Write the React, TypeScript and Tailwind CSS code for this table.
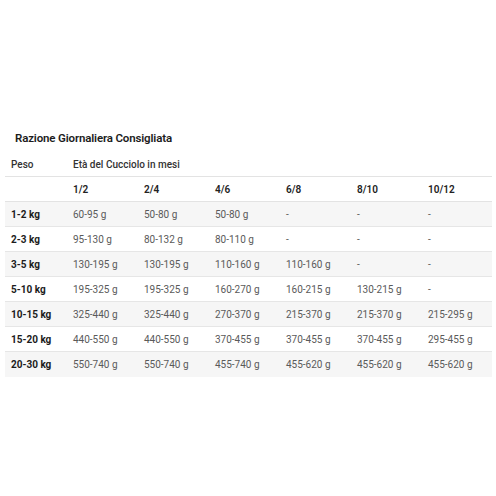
const ages = ["1/2", "2/4", "4/6", "6/8", "8/10", "10/12"]

const rows = [
  { peso: "1-2 kg", values: ["60-95 g", "50-80 g", "50-80 g", "-", "-", "-"] },
  { peso: "2-3 kg", values: ["95-130 g", "80-132 g", "80-110 g", "-", "-", "-"] },
  { peso: "3-5 kg", values: ["130-195 g", "130-195 g", "110-160 g", "110-160 g", "-", "-"] },
  { peso: "5-10 kg", values: ["195-325 g", "195-325 g", "160-270 g", "160-215 g", "130-215 g", "-"] },
  { peso: "10-15 kg", values: ["325-440 g", "325-440 g", "270-370 g", "215-370 g", "215-370 g", "215-295 g"] },
  { peso: "15-20 kg", values: ["440-550 g", "440-550 g", "370-455 g", "370-455 g", "370-455 g", "295-455 g"] },
  { peso: "20-30 kg", values: ["550-740 g", "550-740 g", "455-740 g", "455-620 g", "455-620 g", "455-620 g"] },
]

export default function App() {
  return (
    <div
      className="w-[496px] h-[496px] bg-white pt-[129px]"
      style={{ fontFamily: "Roboto, 'Liberation Sans', sans-serif" }}
    >
      <h1 className="pl-[15px] text-[11.5px] leading-[18px] font-semibold text-[#1c1c1c] tracking-[-0.15px]">
        Razione Giornaliera Consigliata
      </h1>

      <div className="ml-[5px] mt-[6px] w-[487px] text-[10px]">
        {/* header */}
        <div className="grid grid-cols-[62px_repeat(6,71px)] h-[24px] items-center border-b border-[#e3e3e3] text-[#333] font-medium">
          <div className="pl-[6px]">Peso</div>
          <div className="pl-[6px] col-span-6">Età del Cucciolo in mesi</div>
        </div>

        {/* age row */}
        <div className="grid grid-cols-[62px_repeat(6,71px)] h-[25px] items-center border-b border-[#e3e3e3] text-[#222] font-semibold">
          <div></div>
          {ages.map((a) => (
            <div key={a} className="pl-[6px]">{a}</div>
          ))}
        </div>

        {rows.map((r, i) => (
          <div
            key={r.peso}
            className={
              "grid grid-cols-[62px_repeat(6,71px)] h-[25px] items-center " +
              (i % 2 === 0 ? "bg-[#f6f6f6] " : "bg-white ") +
              (i < rows.length - 1 ? "border-b border-[#e6e6e6]" : "")
            }
          >
            <div className="pl-[6px] font-bold text-[#1c1c1c]">{r.peso}</div>
            {r.values.map((v, j) => (
              <div key={j} className="pl-[6px] text-[#5a5a5a]">{v}</div>
            ))}
          </div>
        ))}
      </div>
    </div>
  )
}
